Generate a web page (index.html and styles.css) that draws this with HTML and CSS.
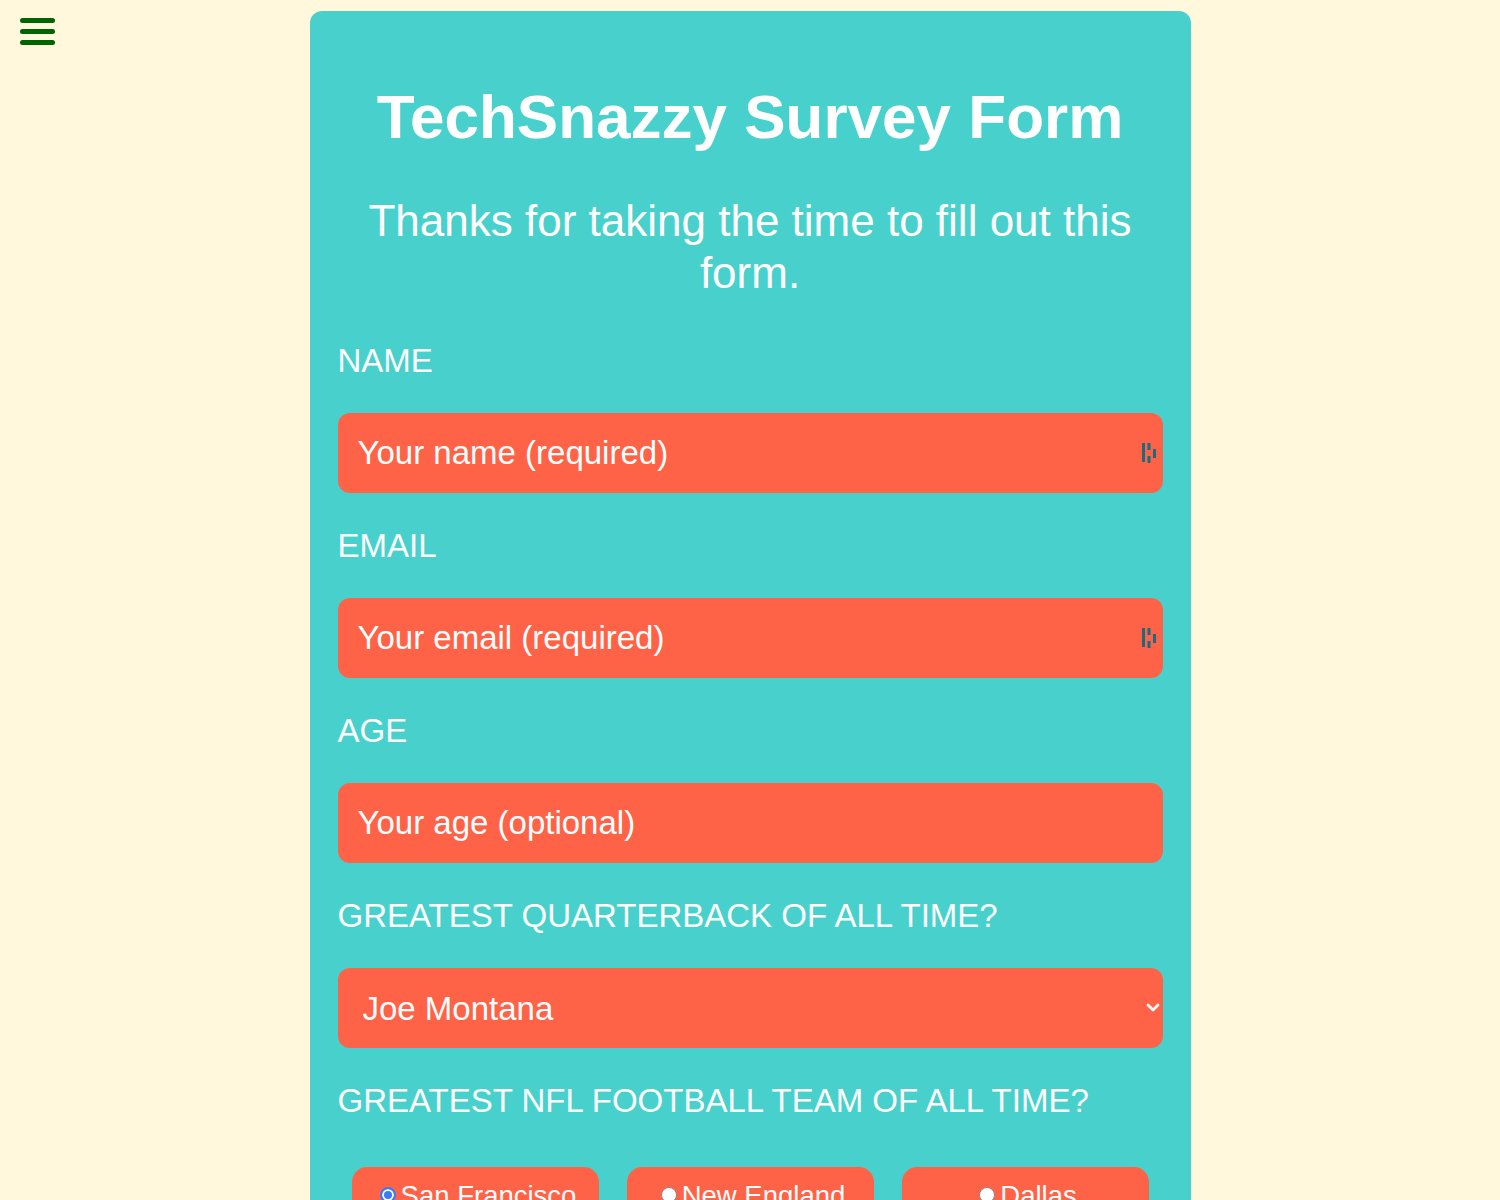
FILE: index.html
```html
<!DOCTYPE html>
<html lang="en">
<head>
<meta charset="utf-8">
<title>TechSnazzy Survey Form</title>
<link rel="stylesheet" href="styles.css">
</head>
<body>
<button class="menu-btn" type="button" aria-label="Menu">
  <svg width="40" height="34" viewBox="0 0 40 34">
    <line x1="3.5" y1="4.5" x2="33.5" y2="4.5"/>
    <line x1="3.5" y1="15.5" x2="33.5" y2="15.5"/>
    <line x1="3.5" y1="26.5" x2="33.5" y2="26.5"/>
  </svg>
</button>
<main class="card">
  <h1 class="title">TechSnazzy Survey Form</h1>
  <p class="subtitle">Thanks for taking the time to fill out this form.</p>
  <form class="survey">
    <div class="field">
      <label class="label" for="name">NAME</label>
      <div class="input-wrap">
        <input class="input" id="name" type="text" placeholder="Your name (required)">
        <svg class="pm-icon" width="14" height="20" viewBox="0 0 14 20"><rect x="0" y="0" width="3" height="19"/><rect x="5.5" y="0" width="3" height="7"/><rect x="5.5" y="13" width="3" height="7"/><rect x="11" y="6" width="3" height="9"/></svg>
      </div>
    </div>
    <div class="field">
      <label class="label" for="email">EMAIL</label>
      <div class="input-wrap">
        <input class="input" id="email" type="email" placeholder="Your email (required)">
        <svg class="pm-icon" width="14" height="20" viewBox="0 0 14 20"><rect x="0" y="0" width="3" height="19"/><rect x="5.5" y="0" width="3" height="7"/><rect x="5.5" y="13" width="3" height="7"/><rect x="11" y="6" width="3" height="9"/></svg>
      </div>
    </div>
    <div class="field">
      <label class="label" for="age">AGE</label>
      <div class="input-wrap">
        <input class="input" id="age" type="number" placeholder="Your age (optional)">
      </div>
    </div>
    <div class="field">
      <label class="label" for="qb">GREATEST QUARTERBACK OF ALL TIME?</label>
      <div class="input-wrap">
        <select class="input select" id="qb">
          <option>Joe Montana</option>
          <option>Tom Brady</option>
          <option>Peyton Manning</option>
        </select>
        <svg class="chevron" width="14" height="10" viewBox="0 0 14 10"><polyline points="2,2 7,7 12,2"/></svg>
      </div>
    </div>
    <div class="field">
      <span class="label">GREATEST NFL FOOTBALL TEAM OF ALL TIME?</span>
      <div class="radio-row">
        <label class="radio-box"><input class="radio" type="radio" name="team" checked>San Francisco</label>
        <label class="radio-box"><input class="radio" type="radio" name="team">New England</label>
        <label class="radio-box"><input class="radio" type="radio" name="team">Dallas</label>
      </div>
    </div>
  </form>
</main>
</body>
</html>
```
FILE: styles.css
```css
html, body {
  margin: 0;
  padding: 0;
  background: #fff8dc;
  font-family: "Liberation Sans", Arial, Helvetica, sans-serif;
}

.menu-btn {
  position: fixed;
  top: 16px;
  left: 19px;
  padding: 0;
  border: 0;
  background: transparent;
  width: 40px;
  height: 34px;
  cursor: pointer;
}

.menu-btn svg line {
  stroke: #006400;
  stroke-width: 5;
  stroke-linecap: round;
}

.card {
  width: 881px;
  box-sizing: border-box;
  margin: 11px auto 0;
  padding: 70px 28px 60px;
  background: #48d1cc;
  border-radius: 12px;
  color: #fff;
}

.title {
  margin: 0 0 43px;
  font-size: 62px;
  line-height: 1.15;
  font-weight: 700;
  text-align: center;
}

.subtitle {
  margin: 0 0 44px;
  font-size: 44px;
  line-height: 1.17;
  text-align: center;
  padding: 0 20px;
}

.survey {
  display: flex;
  flex-direction: column;
  gap: 34px;
}

.field {
  display: flex;
  flex-direction: column;
  gap: 34px;
}

.label {
  display: block;
  font-size: 33px;
  line-height: 37px;
  color: #fff;
}

.input-wrap {
  position: relative;
}

.input {
  display: block;
  width: 100%;
  box-sizing: border-box;
  height: 80px;
  margin: 0;
  padding: 0 20px;
  border: 0;
  border-radius: 12px;
  background: #ff6347;
  color: #fff;
  font-family: inherit;
  font-size: 33px;
  outline: none;
}

.input::placeholder {
  color: #fff;
  opacity: 1;
}

.input[type=number]::-webkit-inner-spin-button,
.input[type=number]::-webkit-outer-spin-button {
  -webkit-appearance: none;
  margin: 0;
}

.select {
  -webkit-appearance: none;
  appearance: none;
  padding-left: 25px;
}

.select option {
  background: #ff6347;
  color: #fff;
}

.pm-icon {
  position: absolute;
  right: 7px;
  top: 30px;
  fill: #1c6a7e;
  pointer-events: none;
}

.chevron {
  position: absolute;
  right: 3px;
  top: 35px;
  fill: none;
  stroke: #fff;
  stroke-width: 2.8;
  stroke-linecap: round;
  stroke-linejoin: round;
  pointer-events: none;
}

.radio-row {
  display: grid;
  grid-template-columns: repeat(3, 1fr);
  gap: 28px;
  padding: 14px 14px 0;
}

.radio-box {
  display: flex;
  align-items: center;
  justify-content: center;
  background: #ff6347;
  border-radius: 15px;
  padding: 13px 8px 14px;
  font-size: 27.5px;
  line-height: 32px;
  color: #fff;
  cursor: pointer;
}

.radio {
  -webkit-appearance: none;
  appearance: none;
  width: 16px;
  height: 16px;
  margin: -2px 5px 0 6px;
  border-radius: 50%;
  border: 1px solid #8a8a8a;
  background: #fff;
  box-sizing: border-box;
  flex: none;
}

.radio:checked {
  border: 2px solid #3b7bf6;
  background: #3b7bf6;
  box-shadow: inset 0 0 0 2px #fff;
}
```
